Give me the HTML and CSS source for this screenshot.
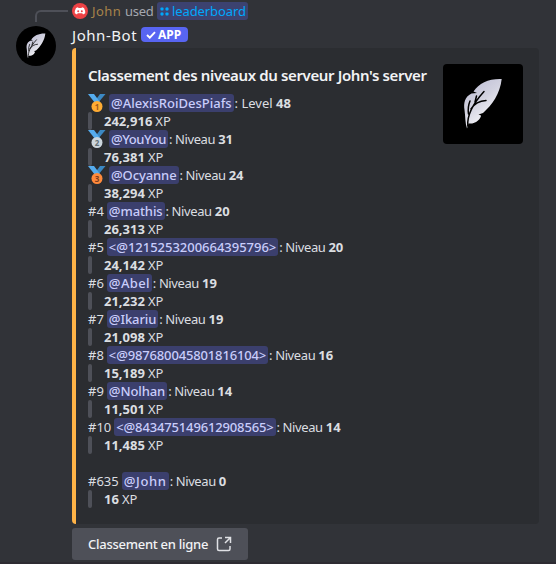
FILE: index.html
```html
<!DOCTYPE html>
<html lang="fr">
<head>
<meta charset="utf-8">
<title>John-Bot</title>
<link rel="stylesheet" href="styles.css">
</head>
<body>
<svg width="0" height="0" class="defs">
  <defs>
    <linearGradient id="plume" x1="0" y1="0" x2=".6" y2="1"><stop offset="0" stop-color="#b9b9d2"/><stop offset=".5" stop-color="#d2d2e0"/><stop offset="1" stop-color="#fff"/></linearGradient>
    <symbol id="feather" viewBox="0 0 80 80">
      <path fill="url(#plume)" d="M58.700 15C46 14.500 36 19 30.500 27.500L34 29L28.500 29.500C21.500 33 20.500 39 21.500 46C22.500 53 22 59 24 64.500L25.500 59.500C32 60.500 38 55 38 51.500L35.500 50.500L40 49C49 41 57 30 58.700 15Z"/>
      <path fill="none" stroke="#000" stroke-width="1.500" stroke-linecap="round" d="M24.800 62C24 53 27 43 41 27.500M25.500 50Q24.500 43 27 37M28 45Q33 37 43 36.500M32 38L33.500 32"/>
    </symbol>
    <symbol id="ribbon" viewBox="0 0 18 18">
      <path fill="#3b88c3" d="M17.500 0H12L8 5.500L10 9Z"/>
      <path fill="#55acee" d="M0 0H6L12 8L7 9Z"/>
      <circle cx="9" cy="12.500" r="5.500" fill="currentColor"/>
    </symbol>
  </defs>
</svg>
<main class="message">
  <div class="reply">
    <span class="spine"></span>
    <svg class="mini" viewBox="0 0 16 16"><circle cx="8" cy="8" r="8" fill="#ed4245"/><path fill="#fff" d="M5.900 4.200L6.600 5H9.400L10.100 4.200L12 5Q13.400 7.500 13.200 10.200L11 11.400L10.300 10.300H5.700L5 11.400L2.800 10.200Q2.600 7.500 4 5Z"/><circle cx="6.200" cy="8.200" r="1" fill="#ed4245"/><circle cx="9.800" cy="8.200" r="1" fill="#ed4245"/></svg>
    <span class="user">John</span><span class="used">used</span>
    <span class="command"><svg viewBox="0 0 9 9" class="cmd"><rect x=".5" y=".5" width="3" height="3" rx=".8"/><circle cx="7" cy="2" r="1.700"/><circle cx="2" cy="7" r="1.700"/><rect x="5.500" y="5.500" width="3" height="3" rx=".8"/></svg><span>leaderboard</span></span>
  </div>
  <div class="body">
    <div class="avatar"><svg><use href="#feather"/></svg></div>
    <div class="content">
      <div class="author"><span class="name">John-Bot</span><span class="app"><svg viewBox="0 0 10 8"><path d="M1 4L3.800 6.700L9 1.200" fill="none" stroke="#fff" stroke-width="1.900"/></svg><span>APP</span></span></div>
      <article class="embed">
        <div class="text">
          <h1>Classement des niveaux du serveur John's server</h1>
          <div class="row"><svg class="medal gold"><use href="#ribbon"/><text x="9" y="15.500">1</text></svg><span class="mention first">@AlexisRoiDesPiafs</span><span class="level en">: Level <b>48</b></span></div>
          <div class="xp"><b>242,916</b> XP</div>
          <div class="row"><svg class="medal silver"><use href="#ribbon"/><text x="9" y="15.500">2</text></svg><span class="mention tight">@YouYou</span><span class="level">: Niveau <b>31</b></span></div>
          <div class="xp"><b>76,381</b> XP</div>
          <div class="row"><svg class="medal bronze"><use href="#ribbon"/><text x="9" y="15.500">3</text></svg><span class="mention">@Ocyanne</span><span class="level">: Niveau <b>24</b></span></div>
          <div class="xp"><b>38,294</b> XP</div>
          <div class="row"><span class="rank">#4</span><span class="mention">@mathis</span><span class="level">: Niveau <b>20</b></span></div>
          <div class="xp"><b>26,313</b> XP</div>
          <div class="row"><span class="rank">#5</span><span class="mention raw long">&lt;@1215253200664395796&gt;</span><span class="level">: Niveau <b>20</b></span></div>
          <div class="xp"><b>24,142</b> XP</div>
          <div class="row"><span class="rank">#6</span><span class="mention wide">@Abel</span><span class="level">: Niveau <b>19</b></span></div>
          <div class="xp"><b>21,232</b> XP</div>
          <div class="row"><span class="rank">#7</span><span class="mention">@Ikariu</span><span class="level">: Niveau <b>19</b></span></div>
          <div class="xp"><b>21,098</b> XP</div>
          <div class="row"><span class="rank">#8</span><span class="mention raw">&lt;@987680045801816104&gt;</span><span class="level">: Niveau <b>16</b></span></div>
          <div class="xp"><b>15,189</b> XP</div>
          <div class="row"><span class="rank">#9</span><span class="mention">@Nolhan</span><span class="level">: Niveau <b>14</b></span></div>
          <div class="xp"><b>11,501</b> XP</div>
          <div class="row"><span class="rank">#10</span><span class="mention raw">&lt;@843475149612908565&gt;</span><span class="level">: Niveau <b>14</b></span></div>
          <div class="xp"><b>11,485</b> XP</div>
          <div class="row self"><span class="rank">#635</span><span class="mention wider">@John</span><span class="level">: Niveau <b>0</b></span></div>
          <div class="xp"><b>16</b> XP</div>
        </div>
        <div class="thumb"><svg><use href="#feather"/></svg></div>
      </article>
      <button class="link"><span>Classement en ligne</span><svg viewBox="0 0 16 16" fill="none" stroke="#e0e1e5" stroke-width="1.500"><path d="M6 2H3Q1.500 2 1.500 3.500V13Q1.500 14.500 3 14.500H12.500Q14 14.500 14 13V10M9 1.500H14.500V7M14 2L9 7"/></svg></button>
    </div>
  </div>
</main>
</body>
</html>
```
FILE: styles.css
```css
* { box-sizing: border-box; }
body { margin: 0; background: #313338; color: #dbdee1; font-family: "Noto Sans", sans-serif; font-size: 13px; overflow: hidden; }
.defs { position: absolute; }
.message { height: 564px; padding: 1px 16px 0; border-bottom: 2px solid #2d2b32; }
.reply { display: flex; align-items: center; height: 20px; padding-left: 19px; color: #a5a8af; }
.spine { width: 33px; height: 12px; margin: 9px 4px 0 0; border: solid #4e5058; border-width: 2px 0 0 2px; border-top-left-radius: 6px; flex: none; }
.mini { width: 16px; height: 16px; margin-right: 4px; flex: none; }
.user { width: 30px; color: #a8834a; margin-right: 3px; letter-spacing: .4px; }
.used { width: 28px; margin-right: 4px; letter-spacing: -.3px; }
.command { display: flex; align-items: center; height: 18px; padding: 0 2px; border-radius: 3px; background: #3c4270; color: #00a8fc; letter-spacing: -.1px; }
.cmd { width: 9px; height: 9px; margin: 0 3px 0 1px; fill: currentColor; }
.body { display: flex; gap: 16px; }
.avatar { width: 40px; height: 40px; margin-top: 5px; border-radius: 50%; background: #000; overflow: hidden; flex: none; }
.avatar svg { width: 40px; height: 40px; }
.content { flex: none; width: 467px; }
.author { display: flex; align-items: center; height: 27px; color: #f2f3f5; white-space: nowrap; }
.name { width: 65px; font-size: 15px; letter-spacing: .55px; margin-right: 4px; }
.app { display: flex; align-items: center; width: 47px; height: 15px; padding: 0 5px; border-radius: 4px; background: #5865f2; color: #fff; font-size: 12px; font-weight: 700; }
.app svg { width: 10px; height: 8px; margin-right: 2px; flex: none; }
.embed { display: flex; justify-content: space-between; height: 476px; padding: 16px 16px 16px 12px; border-left: 4px solid #ffb347; border-radius: 4px; background: #2b2d31; white-space: nowrap; }
.embed h1 { margin: 0 0 8px; height: 22px; line-height: 22px; font-size: 15px; font-weight: 600; letter-spacing: -.37px; color: #f2f3f5; }
.row { display: flex; align-items: center; height: 18px; line-height: 18px; }
.self { margin-top: 18px; }
.rank { margin-right: 3px; }
.medal { width: 18px; height: 18px; margin-right: 3px; overflow: visible; }
.medal text { font: 700 8px "Noto Sans", sans-serif; text-anchor: middle; }
.gold { color: #ffac33; } .gold text { fill: #9c5b1d; }
.silver { color: #ccd6dd; } .silver text { fill: #627077; }
.bronze { color: #ff8a3b; } .bronze text { fill: #7c3d1e; }
.mention { height: 18px; padding: 0 2px; border-radius: 3px; background: #3b3f6d; color: #c9cdfb; font-weight: 500; letter-spacing: -.1px; }
.first { letter-spacing: 0; }
.raw { letter-spacing: -.15px; }
.long { letter-spacing: -.02px; }
.tight { letter-spacing: -.4px; }
.wide { letter-spacing: .35px; }
.wider { letter-spacing: .65px; }
.level { margin-left: 1px; letter-spacing: -.4px; }
.level.en { letter-spacing: 0; }
b { font-weight: 700; letter-spacing: 0; }
.xp { display: flex; gap: 3px; height: 18px; line-height: 18px; }
.xp::before { content: ""; width: 4px; margin-right: 9px; border-radius: 2px; background: #4e5058; }
.thumb { width: 80px; height: 80px; border-radius: 4px; overflow: hidden; background: #000; flex: none; }
.thumb svg { width: 80px; height: 80px; }
.link { display: flex; align-items: center; gap: 8px; width: 176px; height: 32px; margin-top: 4px; padding: 0 16px; border: 0; border-radius: 3px; background: #4e5058; color: #f2f3f5; font: 500 13px "Noto Sans", sans-serif; letter-spacing: -.27px; white-space: nowrap; }
.link svg { width: 16px; height: 16px; flex: none; }
```
